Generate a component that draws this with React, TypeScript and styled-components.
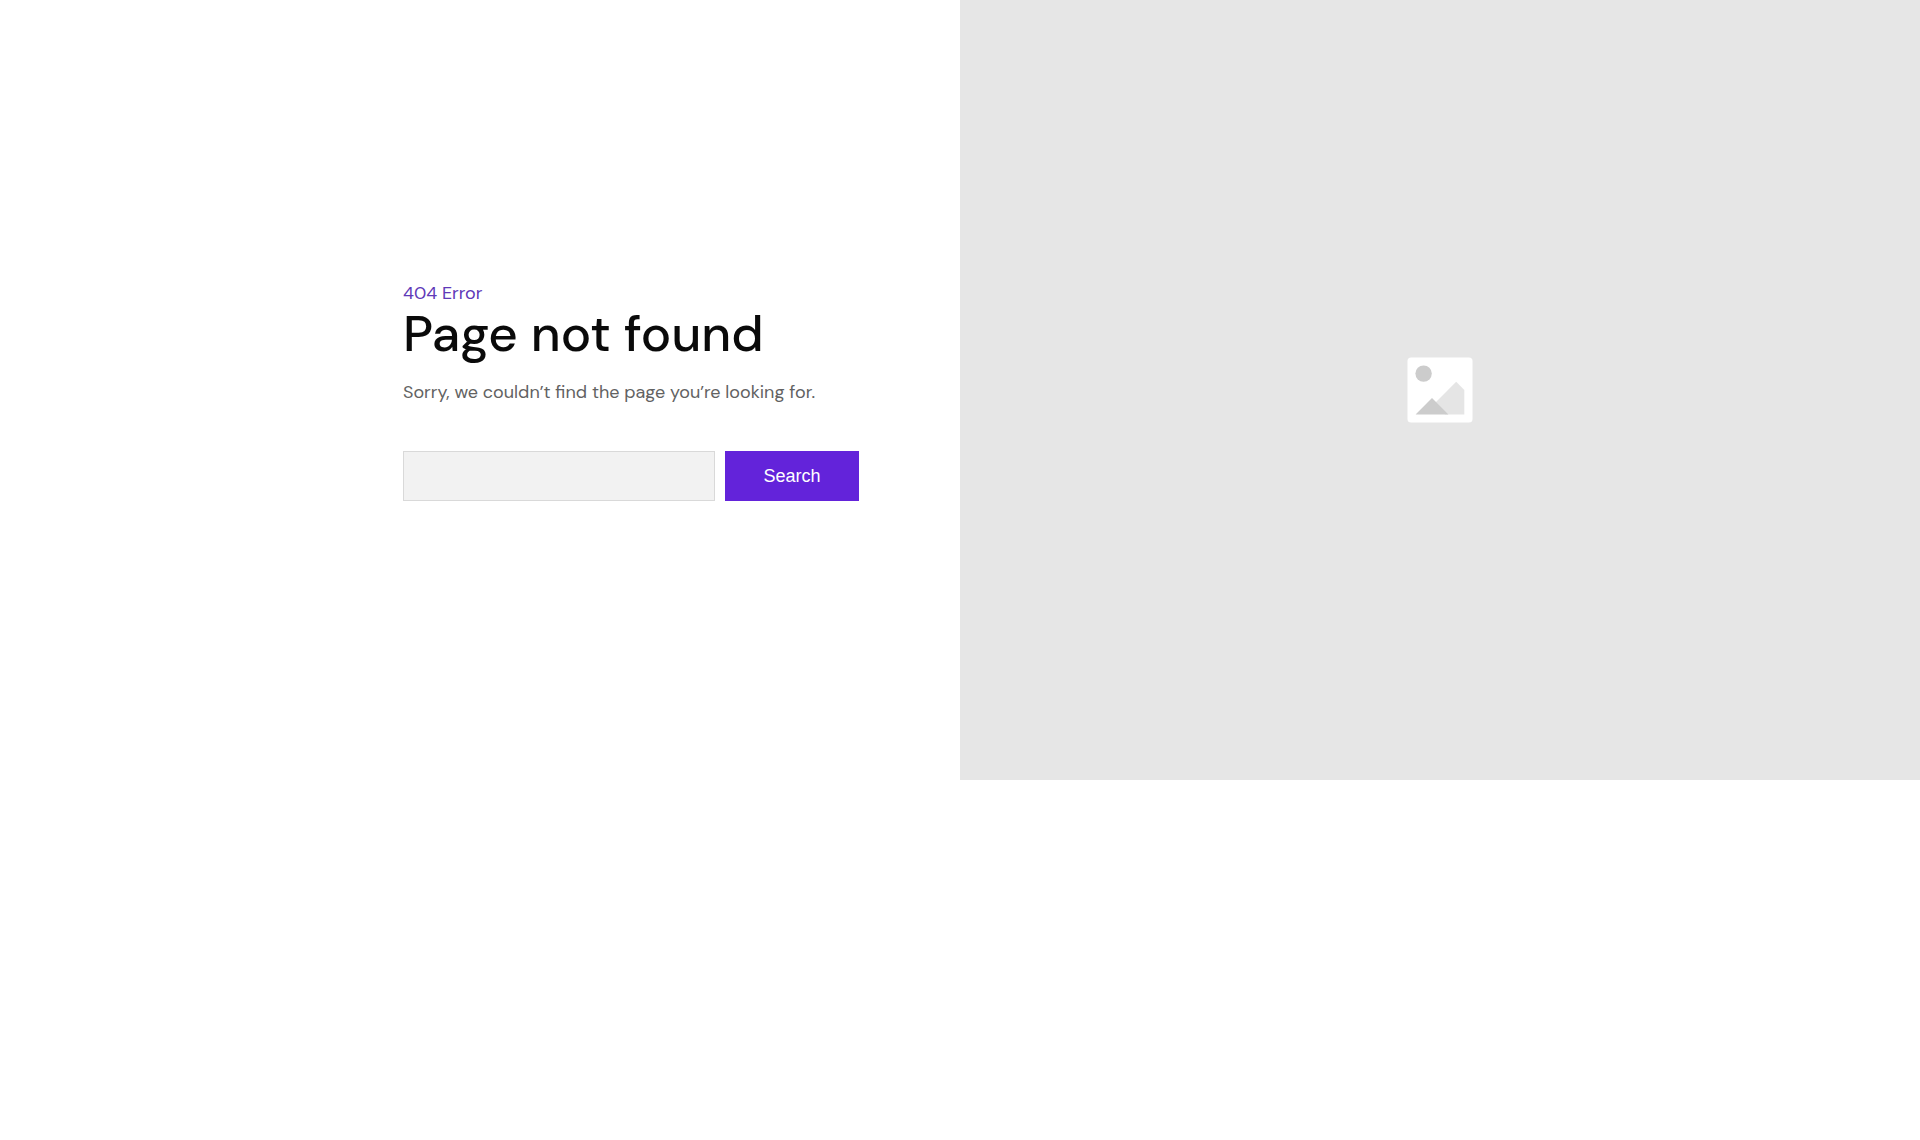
import React from "react";
import styled, { createGlobalStyle } from "styled-components";

const GlobalStyle = createGlobalStyle`
  *, *::before, *::after { box-sizing: border-box; }
  body {
    margin: 0;
    background: #ffffff;
    color: #0a0a0a;
    font-family: "DM Sans", "Open Sans", "Noto Sans", sans-serif;
  }
`;

const Page = styled.main`
  display: grid;
  grid-template-columns: 1fr 1fr;
  min-height: 780px;
`;

const Panel = styled.section`
  display: flex;
  align-items: center;
  justify-content: flex-end;
  padding: 48px 101px 48px 48px;
`;

const Content = styled.div`
  width: 100%;
  max-width: 456px;
`;

const Eyebrow = styled.p`
  margin: 0;
  color: #6039b8;
  font-size: 18px;
  line-height: 28px;
`;

const Title = styled.h1`
  margin: 0 0 17px;
  font-size: 51px;
  font-weight: 500;
  line-height: 54px;
`;

const Message = styled.p`
  margin: 0 0 45px;
  color: #626262;
  font-size: 18px;
  line-height: 28px;
`;

const SearchForm = styled.form`
  display: flex;
  gap: 10px;
`;

const SearchInput = styled.input`
  flex: 1;
  min-width: 0;
  height: 50px;
  padding: 0 16px;
  border: 1px solid #d9d9d9;
  border-radius: 0;
  background: #f2f2f2;
  color: #0a0a0a;
  font: inherit;
  font-size: 18px;
`;

const SearchButton = styled.button`
  min-width: 134px;
  height: 50px;
  padding: 0 38px;
  border: 0;
  background: #6323da;
  color: #ffffff;
  font-family: "Liberation Sans", Arial, sans-serif;
  font-size: 18px;
  cursor: pointer;
`;

const Placeholder = styled.aside`
  display: flex;
  align-items: center;
  justify-content: center;
  background: #e6e6e6;
`;

function ImageIcon() {
  return (
    <svg width="66" height="66" viewBox="0 0 66 66" aria-hidden="true">
      <rect x="0.5" y="0.5" width="65" height="65" rx="3.5" fill="#ffffff" />
      <circle cx="16.6" cy="16.6" r="8.2" fill="#cccccc" />
      <path d="M28.5 45.5 49.2 24.8 57.3 32.9V57.4H38Z" fill="#e5e5e5" />
      <path d="M8.6 57.4 25 41l16.4 16.4Z" fill="#cccccc" />
    </svg>
  );
}

export default function App() {
  return (
    <>
      <GlobalStyle />
      <Page>
        <Panel>
          <Content>
            <Eyebrow>404 Error</Eyebrow>
            <Title>Page not found</Title>
            <Message>Sorry, we couldn’t find the page you’re looking for.</Message>
            <SearchForm role="search" onSubmit={(event) => event.preventDefault()}>
              <SearchInput type="search" name="query" aria-label="Search" />
              <SearchButton type="submit">Search</SearchButton>
            </SearchForm>
          </Content>
        </Panel>
        <Placeholder>
          <ImageIcon />
        </Placeholder>
      </Page>
    </>
  );
}
